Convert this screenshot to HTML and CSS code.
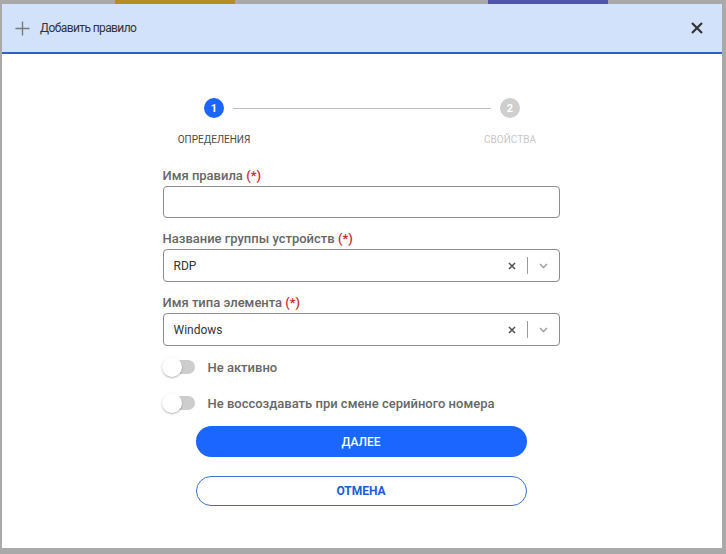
FILE: index.html
```html
<!DOCTYPE html>
<html lang="ru">
<head>
<meta charset="utf-8">
<title>Добавить правило</title>
<link rel="stylesheet" href="styles.css">
</head>
<body>
<div class="backdrop">
  <div class="strip">
    <span class="bar bar-orange"></span>
    <span class="bar bar-purple"></span>
  </div>
  <div class="dialog">
    <div class="header">
      <svg class="plus" width="15" height="15" viewBox="0 0 15 15"><path d="M7.5 0.5v14M0.5 7.5h14" stroke="#7a7a7a" stroke-width="1.4" fill="none"/></svg>
      <span class="title">Добавить правило</span>
      <svg class="close" width="12" height="12" viewBox="0 0 12 12"><path d="M1 1l10 10M11 1L1 11" stroke="#333" stroke-width="2.2" fill="none"/></svg>
    </div>
    <div class="body">
      <div class="stepper">
        <div class="step">
          <div class="circle active">1</div>
          <div class="step-label active">Определения</div>
        </div>
        <div class="line"></div>
        <div class="step">
          <div class="circle">2</div>
          <div class="step-label">Свойства</div>
        </div>
      </div>
      <div class="form">
        <div class="field">
          <div class="label">Имя правила <span class="req">(*)</span></div>
          <div class="input"></div>
        </div>
        <div class="field">
          <div class="label">Название группы устройств <span class="req">(*)</span></div>
          <div class="select">
            <span class="value">RDP</span>
            <svg class="clear" width="8" height="8" viewBox="0 0 8 8"><path d="M1 1l6 6M7 1L1 7" stroke="#555" stroke-width="1.6" fill="none"/></svg>
            <span class="divider"></span>
            <span class="chev"><svg width="9" height="6" viewBox="0 0 9 6"><path d="M1 1l3.5 3.5L8 1" stroke="#999" stroke-width="1.3" fill="none"/></svg></span>
          </div>
        </div>
        <div class="field">
          <div class="label">Имя типа элемента <span class="req">(*)</span></div>
          <div class="select">
            <span class="value">Windows</span>
            <svg class="clear" width="8" height="8" viewBox="0 0 8 8"><path d="M1 1l6 6M7 1L1 7" stroke="#555" stroke-width="1.6" fill="none"/></svg>
            <span class="divider"></span>
            <span class="chev"><svg width="9" height="6" viewBox="0 0 9 6"><path d="M1 1l3.5 3.5L8 1" stroke="#999" stroke-width="1.3" fill="none"/></svg></span>
          </div>
        </div>
        <div class="toggle-row first">
          <span class="toggle"><span class="knob"></span></span>
          <span class="toggle-text">Не активно</span>
        </div>
        <div class="toggle-row second">
          <span class="toggle"><span class="knob"></span></span>
          <span class="toggle-text">Не воссоздавать при смене серийного номера</span>
        </div>
      </div>
      <button class="btn btn-primary">Далее</button>
      <button class="btn btn-outline">Отмена</button>
    </div>
  </div>
</div>
</body>
</html>
```
FILE: styles.css
```css
html, body {
  margin: 0;
  padding: 0;
}
body {
  background: #a9a9a9;
  font-family: Roboto, "Liberation Sans", Arial, sans-serif;
}
.backdrop {
  width: 726px;
  height: 554px;
  display: flex;
  flex-direction: column;
}
.strip {
  height: 4px;
  display: flex;
  flex: none;
}
.bar {
  display: block;
  height: 4px;
  width: 120px;
}
.bar-orange {
  margin-left: 115px;
  background: #b68d22;
}
.bar-purple {
  margin-left: 253px;
  background: #5155a8;
}
.dialog {
  margin: 0 4px 0 2px;
  height: 544px;
  background: #fff;
  display: flex;
  flex-direction: column;
}
.header {
  height: 48px;
  background: #d2e2fb;
  border-bottom: 2px solid #2b62c4;
  display: flex;
  align-items: center;
  padding: 0 19px 0 13px;
  flex: none;
}
.plus {
  display: block;
}
.title {
  margin-left: 10px;
  font-size: 12px;
  color: #333;
  flex: 1;
  letter-spacing: -0.6px;
}
.close {
  display: block;
}
.body {
  display: flex;
  flex-direction: column;
  align-items: center;
  padding: 44px 2px 0 0;
}
.stepper {
  width: 316px;
  margin-left: 2px;
  display: flex;
  align-items: flex-start;
}
.step {
  width: 20px;
  display: flex;
  flex-direction: column;
  align-items: center;
}
.circle {
  width: 20px;
  height: 20px;
  border-radius: 50%;
  background: #cfcfcf;
  color: #fff;
  font-size: 11px;
  font-weight: 700;
  display: flex;
  align-items: center;
  justify-content: center;
}
.circle.active {
  background: #1a66ff;
}
.line {
  flex: 1;
  height: 1px;
  background: #bdbdbd;
  margin: 10px 9px 0;
}
.step-label {
  margin-top: 16px;
  font-size: 10px;
  line-height: 12px;
  text-transform: uppercase;
  white-space: nowrap;
  color: #c8c8c8;
}
.step-label.active {
  color: #4a4a4a;
}
.form {
  width: 397px;
  margin-top: 22px;
}
.field {
  margin-bottom: 13px;
}
.label {
  font-size: 13px;
  line-height: 16px;
  font-weight: 500;
  color: #676767;
  margin-bottom: 2px;
}
.req {
  color: #c62828;
}
.input {
  height: 32px;
  box-sizing: border-box;
  border: 1px solid #8c8c8c;
  border-radius: 4px;
}
.select {
  height: 33px;
  box-sizing: border-box;
  border: 1px solid #8c8c8c;
  border-radius: 4px;
  display: flex;
  align-items: center;
  padding-left: 10px;
}
.value {
  flex: 1;
  font-size: 12px;
  color: #333;
}
.clear {
  display: block;
  margin-right: 11px;
}
.divider {
  width: 1px;
  height: 17px;
  background: #9a9a9a;
}
.chev {
  width: 31px;
  display: flex;
  justify-content: center;
}
.chev svg {
  display: block;
}
.toggle-row {
  display: flex;
  align-items: center;
  height: 20px;
}
.toggle-row.first {
  margin-top: -2px;
}
.toggle-row.second {
  margin-top: 16px;
}
.toggle {
  position: relative;
  width: 32px;
  height: 14px;
  border-radius: 7px;
  background: #cdcdcd;
}
.knob {
  position: absolute;
  left: -1px;
  top: -3px;
  width: 20px;
  height: 20px;
  border-radius: 50%;
  background: #fff;
  box-shadow: 0 1px 2px rgba(0, 0, 0, 0.3);
}
.toggle-text {
  margin-left: 13px;
  font-size: 13px;
  font-weight: 500;
  color: #676767;
}
.btn {
  width: 331px;
  height: 31px;
  border-radius: 16px;
  font-family: inherit;
  font-size: 12px;
  font-weight: 500;
  text-transform: uppercase;
  cursor: pointer;
  box-sizing: border-box;
}
.btn-primary {
  margin-top: 13px;
  background: #1a66ff;
  color: #fff;
  border: none;
}
.btn-outline {
  margin-top: 19px;
  height: 30px;
  background: #fff;
  color: #1c5bd6;
  border: 1px solid #3a6fd0;
  font-weight: 700;
}
```
